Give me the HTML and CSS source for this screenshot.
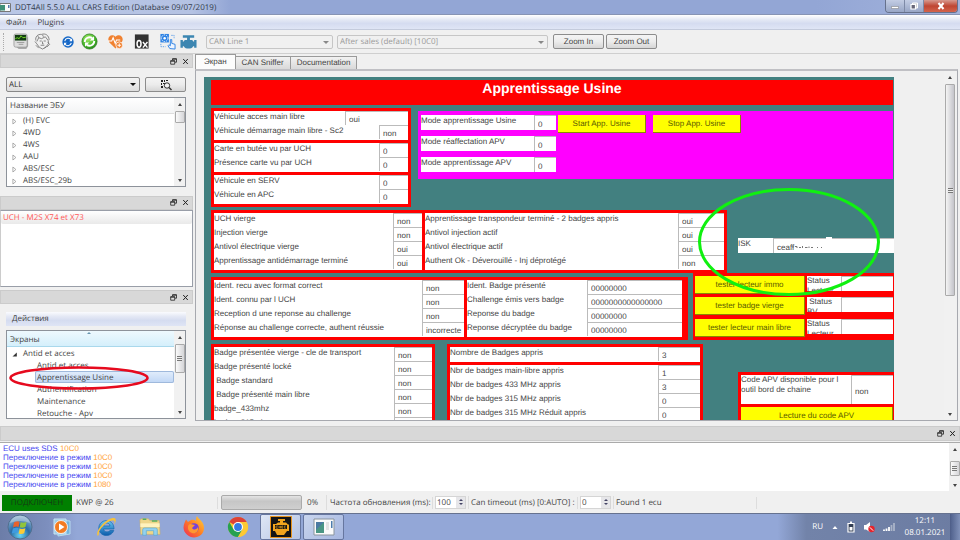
FILE: index.html
```html
<!DOCTYPE html>
<html lang="ru">
<head>
<meta charset="utf-8">
<title>DDT4All 5.5.0 ALL CARS Edition</title>
<link rel="stylesheet" href="styles.css">
</head>
<body>
<svg class="defs" aria-hidden="true">
  <defs>
    <symbol id="float" viewBox="0 0 7 7"><path d="M2.5 2V.8h4v3.4H5" fill="none" stroke="#222" stroke-width=".8"/><path d="M2.500 1h4" stroke="#222"/><path d="M.7 2.800h4v3.400h-4z" fill="#ddd" stroke="#222" stroke-width=".8"/><path d="M.5 3h4.400" stroke="#222"/></symbol>
    <symbol id="close" viewBox="0 0 7 7"><path d="M1.200 1l4.600 5M5.800 1L1.200 6" stroke="#222"/></symbol>
    <symbol id="twig" viewBox="0 0 5 7"><path d="M.9 1l3 2.500-3 2.500z" fill="#fff" stroke="#999" stroke-width=".8"/></symbol>
    <radialGradient id="orb" cx=".5" cy=".85" r=".8"><stop offset="0" stop-color="#67d4f5"/><stop offset=".5" stop-color="#2a6ba6"/><stop offset="1" stop-color="#8fb2cf"/></radialGradient>
    <radialGradient id="green" cx=".4" cy=".3" r=".8"><stop offset="0" stop-color="#a9ef6a"/><stop offset=".6" stop-color="#44b629"/><stop offset="1" stop-color="#1f7a19"/></radialGradient>
    <linearGradient id="fox" x1="1" y1="0" x2="0" y2="1"><stop offset="0" stop-color="#ffd83a"/><stop offset=".5" stop-color="#ff7b22"/><stop offset="1" stop-color="#ee2a5c"/></linearGradient>
    <linearGradient id="ie" x1="0" y1="0" x2="0" y2="1"><stop offset="0" stop-color="#66c8f5"/><stop offset="1" stop-color="#0c5aaa"/></linearGradient>
  </defs>
</svg>

<header class="titlebar">
  <svg class="app-icon" viewBox="0 0 11 9"><path d="M0 .5h10.500v8H0z" fill="#fafafa" stroke="#777"/><path d="M0 2h5v5.500H0z" fill="#3f8f78"/><path d="M8 2h1.500v3H8z" fill="#5277a8"/></svg>
  <span class="title">DDT4All 5.5.0 ALL CARS Edition (Database 09/07/2019)</span>
  <div class="window-buttons">
    <button aria-label="Minimize"><svg viewBox="0 0 10 8"><path d="M1.500 4.500h7v2h-7z" fill="#fff" stroke="#777" stroke-width=".5"/></svg></button>
    <button aria-label="Restore"><svg viewBox="0 0 10 8"><path d="M3.500 1h5v5h-5z" fill="#ccc" stroke="#fff"/><path d="M2 2.500h4.500V7H2z" fill="#667" stroke="#fff" stroke-width="1.200"/></svg></button>
    <button class="quit" aria-label="Close"><svg viewBox="0 0 10 8"><path d="M2.500 1l5 6M7.500 1l-5 6" stroke="#fff" stroke-width="2"/></svg></button>
  </div>
</header>

<nav class="menubar"><button>Файл</button><button>Plugins</button></nav>

<div class="toolbar">
  <span class="grip"></span>
  <div class="tools">
    <button aria-label="Scan"><svg viewBox="0 0 18 18"><path d="M4 15l2 2h8l2-3V4z" fill="#aaa"/><rect x="1" y="1" width="14" height="14" rx="2" fill="#ddd" stroke="#888" stroke-width=".7"/><path d="M2 2h12v6H2z" fill="#123c12"/><path d="M2.500 6l2-1 2 1 2-3 2 2 3-.5" fill="none" stroke="#78dc26"/><path d="M4 10h8M6 12h5" stroke="#999"/></svg></button>
    <button class="wide" aria-label="Expert mode"><svg viewBox="0 0 18 18" fill="none" stroke="#666" stroke-width=".8"><path d="M2 8C1 4 4 1 8 1.500c4-1.500 8 1 8 6M3 9l2-4 3 1 4-2 3 4 .5 3-3 4-3.500 2-3.500-2L3 11.500 1 9M6 8.500h2.200m2 0h2.300M9 9v2.500h1.200M7 13h4M2 13l3 3M14.500 10l2 2-3 3M4 3l1 2M9 2l1 2M11 16l2-1.500"/></svg></button>
    <button aria-label="Reload"><svg viewBox="0 0 18 18"><circle cx="8.500" cy="9.500" r="6" fill="#1668c7"/><path d="M5 8.500a3.800 3.800 0 017-1M12 10.500a3.800 3.800 0 01-7 1" fill="none" stroke="#fff" stroke-width="1.100"/><path d="M12.800 5.500v3.200H9.800zM4.200 13.500v-3.200h3z" fill="#fff"/></svg></button>
    <button class="wide" aria-label="Refresh"><svg viewBox="0 0 18 18"><circle cx="9" cy="9" r="8" fill="url(#green)" stroke="#2c7d1d" stroke-width=".8"/><path d="M4 9.500a5 5 0 018-4M14 8.500a5 5 0 01-8 4" fill="none" stroke="#fff" stroke-width="2"/><path d="M13.800 3.500v4.500H9.300zM4.200 14.500V10h4.500z" fill="#fff"/></svg></button>
    <button class="wide" aria-label="Diagnostic"><svg viewBox="0 0 18 18"><path d="M9 16.500L2.500 10C-1 5 4.500-.5 9 4c4.500-4.500 10 1 6.500 6z" fill="#f08130"/><path d="M1 8.500h4L6.500 5l2.200 6L10 7.500h4" fill="none" stroke="#fff" stroke-width="1.100"/><circle cx="13" cy="13" r="3.600" fill="#f08130" stroke="#fff" stroke-width=".8"/><path d="M13 11v4M11 13h4" stroke="#fff"/></svg></button>
    <button class="wide" aria-label="Hexadecimal"><svg viewBox="0 0 18 18"><path d="M2 1.500h14.500v15H2z" fill="#333"/><ellipse cx="6.400" cy="11.500" rx="2.100" ry="3.600" fill="none" stroke="#fff" stroke-width="1.600"/><path d="M10.500 9.500l4.800 6M15.300 9.500l-4.800 6" stroke="#fff" stroke-width="1.500"/></svg></button>
    <button aria-label="Commands"><svg viewBox="0 0 18 18"><rect x="1.500" y="1" width="9" height="9" fill="#2d82e4"/><circle cx="6" cy="5.500" r="3.500" fill="#2d82e4" stroke="#fff" stroke-width="1" stroke-dasharray="1.500 1"/><circle cx="6" cy="5.500" r="1.300" fill="#fff"/><path d="M11.500 16.500l-2-3 1-1 1.500 1V7h1.500v4l3.500 1v5z" fill="#eef5ff" stroke="#2d82e4"/><path d="M2 11.500v3h5M13 2.500h3v3" fill="none" stroke="#5c9de8" stroke-dasharray="1.500 1"/></svg></button>
    <button class="wide" aria-label="Valve"><svg viewBox="0 0 18 18" fill="#3c86b1"><path d="M3 2.500h12V5h-4.500v2.500h2.500l1 1.500h1V7.500h2.500v8H15V14h-1c-1 2-3 2.500-5 2.500S5 16 4 14H3v1.500H.5v-8H3V9h1l1-1.500h2.500V5H3z"/></svg></button>
  </div>
  <span class="select line"><select disabled aria-label="CAN line"><option>CAN Line 1</option></select></span>
  <span class="select session"><select disabled aria-label="Session"><option>After sales (default) [10C0]</option></select></span>
  <div class="zooms"><button class="push">Zoom In</button><button class="push">Zoom Out</button></div>
</div>

<main class="workspace">
  <aside class="docks">
    <section class="dock ecus">
      <div class="dock-bar"><svg><use href="#float"/></svg><svg><use href="#close"/></svg></div>
      <div class="dock-body">
        <div class="filter">
          <span class="select dark"><select aria-label="Проект"><option>ALL</option></select></span>
          <button class="push scan" aria-label="Найти"><svg viewBox="0 0 12 12"><path d="M1 1h2v2H1zM4 1h1v2H4zM6 1h2v1H6zM1 4h1v2H1zM3 4h2v1H3zM1 7h2v2H1z" fill="#222"/><circle cx="7" cy="6.500" r="2.700" fill="#f4f4f4" stroke="#333"/><path d="M9 8.500l2.500 2.500" stroke="#333" stroke-width="1.400"/></svg></button>
        </div>
        <div class="tree">
          <div class="tree-main">
            <div class="tree-head">Название ЭБУ</div>
            <ul>
              <li><svg><use href="#twig"/></svg>(H) EVC</li>
              <li><svg><use href="#twig"/></svg>4WD</li>
              <li><svg><use href="#twig"/></svg>4WS</li>
              <li><svg><use href="#twig"/></svg>AAU</li>
              <li><svg><use href="#twig"/></svg>ABS/ESC</li>
              <li><svg><use href="#twig"/></svg>ABS/ESC_29b</li>
            </ul>
          </div>
          <div class="scroll"><i class="up"></i><i class="thumb short"></i><i class="down"></i></div>
        </div>
      </div>
    </section>
    <section class="dock selected-ecus">
      <div class="dock-bar"><svg><use href="#float"/></svg><svg><use href="#close"/></svg></div>
      <div class="ecu-list"><div class="ecu-item">UCH - M2S X74 et X73</div></div>
    </section>
    <section class="dock screens">
      <div class="dock-bar"><svg><use href="#float"/></svg><svg><use href="#close"/></svg></div>
      <div class="dock-body">
        <div class="actions"><button>Действия</button></div>
        <div class="tree">
          <div class="tree-main">
            <div class="tree-head sorted">Экраны</div>
            <ul>
              <li><svg viewBox="0 0 5 7"><path d="M4.800 1.500v4H.5z" fill="#333"/></svg>Antid et acces</li>
              <li class="leaf">Antid et acces</li>
              <li class="leaf current">Apprentissage Usine</li>
              <li class="leaf">Authentification</li>
              <li class="leaf">Maintenance</li>
              <li class="leaf">Retouche - Apv</li>
            </ul>
          </div>
          <div class="scroll"><i class="up"></i><i class="thumb medium"></i><i class="down"></i></div>
        </div>
        <svg class="red-mark" viewBox="0 0 140 24"><ellipse cx="70" cy="12" rx="68.500" ry="10.500" fill="none" stroke="#e60a1e" stroke-width="2.600"/></svg>
      </div>
    </section>
  </aside>

  <section class="pages">
    <div class="tabs"><button class="active">Экран</button><button>CAN Sniffer</button><button>Documentation</button></div>
    <div class="page">
      <div class="canvas">
        <h1>Apprentissage Usine</h1>
        <div class="band first">
          <div class="stack">
            <div class="cells w29">
              <label class="w63"><span>Véhicule acces main libre</span><input readonly value="oui"></label>
              <label><span>Véhicule démarrage main libre - Sc2</span><input readonly value="non"></label>
            </div>
            <div class="cells w29">
              <label><span>Carte en butée vu par UCH</span><input readonly value="0"></label>
              <label><span>Présence carte vu par UCH</span><input readonly value="0"></label>
            </div>
            <div class="cells w29">
              <label><span>Véhicule en SERV</span><input readonly value="0"></label>
              <label><span>Véhicule en APC</span><input readonly value="0"></label>
            </div>
          </div>
          <div class="modes">
            <div class="mode-fields">
              <label class="field"><span>Mode apprentissage Usine</span><input readonly value="0"></label>
              <label class="field"><span>Mode réaffectation APV</span><input readonly value="0"></label>
              <label class="field"><span>Mode apprentissage APV</span><input readonly value="0"></label>
            </div>
            <button class="cmd start">Start App. Usine</button>
            <button class="cmd start">Stop App. Usine</button>
          </div>
        </div>
        <div class="band second">
          <div class="split virgin">
            <div class="cells w29">
              <label><span>UCH vierge</span><input readonly value="non"></label>
              <label><span>Injection vierge</span><input readonly value="non"></label>
              <label><span>Antivol électrique vierge</span><input readonly value="oui"></label>
              <label><span>Apprentissage antidémarrage terminé</span><input readonly value="oui"></label>
            </div>
            <div class="cells w46">
              <label><span>Apprentissage transpondeur terminé - 2 badges appris</span><input readonly value="oui"></label>
              <label><span>Antivol injection actif</span><input readonly value="oui"></label>
              <label><span>Antivol électrique actif</span><input readonly value="oui"></label>
              <label><span>Authent Ok - Déverouillé - Inj déprotégé</span><input readonly value="non"></label>
            </div>
          </div>
          <div class="isk">
            <label class="field"><span>ISK</span><input readonly value="ceaff"></label>
            <svg class="smudge" viewBox="0 0 40 12"><path d="M34 0h6v2h-6z" fill="#fff"/><path d="M1 9v2M3 9.500h2v1.500M7 10.500h2M10.500 9v2M13 10.500h2.500M17 9.500v1.500M19 10.500h2M25 10.500h1M29 10.500h1" fill="none" stroke="#777"/></svg>
          </div>
        </div>
        <div class="band third">
          <div class="split ident">
            <div class="cells w42">
              <label><span>Ident. recu avec format correct</span><input readonly value="non"></label>
              <label><span>Ident. connu par l UCH</span><input readonly value="non"></label>
              <label><span>Reception d une reponse au challenge</span><input readonly value="non"></label>
              <label><span>Réponse au challenge correcte, authent réussie</span><input readonly value="incorrecte"></label>
            </div>
            <div class="cells w95">
              <label><span>Ident. Badge présenté</span><input readonly value="00000000"></label>
              <label><span>Challenge émis vers badge</span><input readonly value="0000000000000000"></label>
              <label><span>Reponse du badge</span><input readonly value="00000000"></label>
              <label><span>Reponse décryptée du badge</span><input readonly value="00000000"></label>
            </div>
          </div>
          <div class="testers">
            <div class="tester"><button class="cmd">tester lecteur immo</button><label class="field"><span>Status Lecteur</span><input readonly></label></div>
            <div class="tester"><button class="cmd">tester badge vierge</button><label class="field"><span>&nbsp;Status BV</span><input readonly></label></div>
            <div class="tester"><button class="cmd">tester lecteur main libre</button><label class="field"><span>Status Lecteur</span><input readonly></label></div>
          </div>
        </div>
        <div class="band fourth">
          <div class="stack badge">
            <div class="cells w38">
              <label><span>Badge présentée vierge - cle de transport</span><input readonly value="non"></label>
              <label><span>Badge présenté locké</span><input readonly value="non"></label>
              <label><span>&nbsp;Badge standard</span><input readonly value="non"></label>
              <label><span>&nbsp;Badge présenté main libre</span><input readonly value="non"></label>
              <label><span>badge_433mhz</span><input readonly value="non"></label>
              <label><span>badge_315mhz</span><input readonly value="non"></label>
            </div>
          </div>
          <div class="stack counts">
            <div class="cells w42"><label><span>Nombre de Badges appris</span><input readonly value="3"></label></div>
            <div class="cells w42">
              <label><span>Nbr de badges main-libre appris</span><input readonly value="1"></label>
              <label><span>Nbr de badges 433 MHz appris</span><input readonly value="3"></label>
              <label><span>Nbr de badges 315 MHz appris</span><input readonly value="0"></label>
              <label><span>Nbr de badges 315 MHz Réduit appris</span><input readonly value="0"></label>
            </div>
          </div>
          <div class="stack code">
            <label class="field tall"><span>Code APV disponible pour l outil bord de chaine</span><input readonly value="non"></label>
            <button class="cmd">Lecture du code APV</button>
          </div>
        </div>
        <svg class="green-mark" viewBox="0 0 184 110"><ellipse cx="92" cy="55" rx="89.500" ry="52.500" fill="none" stroke="#10f010" stroke-width="3"/></svg>
      </div>
      <div class="scroll page-scroll"><i class="up"></i><i class="thumb long"></i><i class="down"></i></div>
    </div>
  </section>
</main>

<section class="log">
  <div class="dock-bar"><svg><use href="#float"/></svg><svg><use href="#close"/></svg></div>
  <div class="log-body">
    <div class="log-lines">
      <p>ECU uses SDS <b>10C0</b></p>
      <p>Переключение в режим <b>10C0</b></p>
      <p>Переключение в режим <b>10C0</b></p>
      <p>Переключение в режим <b>10C0</b></p>
      <p>Переключение в режим <b>1080</b></p>
    </div>
    <div class="scroll"><i class="up"></i><i class="thumb log-thumb"></i><i class="down"></i></div>
  </div>
</section>

<footer class="status">
  <span class="connected">ПОДКЛЮЧЕН</span>
  <span class="proto">KWP @ 26</span>
  <span class="progress"><span class="bar"></span>0%</span>
  <span class="cell rate"><label for="rate">Частота обновления (ms):</label></span>
  <span class="cell"><span class="spin"><input id="rate" value="100"><i></i></span></span>
  <span class="cell timeout"><label for="timeout">Can timeout (ms) [0:AUTO] :</label></span>
  <span class="cell"><span class="spin"><input id="timeout" value="0"><i></i></span></span>
  <span class="cell found">Found 1 ecu</span>
</footer>

<div class="taskbar">
  <button class="task orb" aria-label="Пуск"><svg viewBox="0 0 26 26"><circle cx="13" cy="13" r="12" fill="url(#orb)" stroke="#51708f"/><path d="M7 8.500q3-2 5.500-.7L11.600 13Q9 12 6 13.500z" fill="#e8622c"/><path d="M13.600 8.200q3 1.200 6-.5L18.500 13q-3 1.400-5.800.3z" fill="#90c43a"/><path d="M5.800 14.500q3-1.500 5.600-.4l-1 5q-2.500-1-5.500.4z" fill="#3f9be0"/><path d="M12.600 14.500q3 1.200 5.800-.2l-1.200 5q-3 1.500-5.500.2z" fill="#fccb35"/><path d="M3 9a10.500 10.500 0 0120 0Q13 5 3 9z" fill="#fff" opacity=".3"/></svg></button>
  <button class="task" aria-label="Media Player"><svg viewBox="0 0 22 22"><path d="M7 4l12 1v13L7 20z" fill="#73b5dc" stroke="#b7daef"/><path d="M3 3h12v15H3z" fill="#9dcce8" stroke="#c7e3f2"/><circle cx="10" cy="11" r="6.500" fill="#f27b21" stroke="#fff" stroke-width=".8"/><path d="M8 7.500v7l5.500-3.500z" fill="#fff"/></svg></button>
  <button class="task" aria-label="Internet Explorer"><svg viewBox="0 0 22 22"><path d="M19 13H8.500c.5 3.500 5 3.500 6.500 1.500h3.800C16 22 4 21 3.800 12 4 2.500 19 1.500 19 13zM8.500 10H15c-.5-4-6-4-6.500 0z" fill="url(#ie)" stroke="#1567ad" stroke-width=".7"/><path d="M3 20C-1 17 10 2 19 2c4 1 0 7 0 7 1-3 1-5-2-4.500C10 6 3 15 4 18z" fill="#f6c23e"/></svg></button>
  <button class="task" aria-label="Проводник"><svg viewBox="0 0 24 22"><path d="M1 3l2-1h7l2 2h10l1 15H2z" fill="#eed68a" stroke="#d6b45a" stroke-width=".6"/><path d="M4 2.500h4M14 4.500h6" stroke="#56ad62" stroke-width="1.500"/><path d="M1.500 7h21v4h-21z" fill="#fff2bd"/><path d="M4 20v-6q0-2 2-2h12q2 0 2 2v6h-4v-5H8v5z" fill="#94d1ee" stroke="#56a8d3" stroke-width=".7"/></svg></button>
  <button class="task" aria-label="Firefox"><svg viewBox="0 0 22 22"><path d="M14 0c1 3 7 5 7 12 0 6-5 9.500-10 9.500S.5 17 .5 11.500C.5 8 2 6 3 3.500L5 6l3-2c2-.5 4 0 5 1 0-2 0-3 1-5z" fill="url(#fox)"/><circle cx="11" cy="12" r="4.800" fill="#7542d9"/><path d="M5.500 9C8 7 9 9 12 9l-3 3c2 3 5 1 6-1 1 5-3 7-6 6-3-1-5-4-3.500-8z" fill="#ff9831"/></svg></button>
  <button class="task" aria-label="Chrome"><svg viewBox="0 0 22 22"><circle cx="11" cy="11" r="10" fill="#fcc934"/><path d="M11 11L2.300 6A10 10 0 0119.700 6z" fill="#dd4237"/><path d="M2.300 6A10 10 0 0011 21l4.500-7.500L11 11 6.500 13.500z" fill="#26a150"/><path d="M11 6h8.700A10 10 0 0111 21l4.500-7.500z" fill="#fcc934"/><circle cx="11" cy="11" r="5" fill="#fff"/><circle cx="11" cy="11" r="3.900" fill="#347ae5"/></svg></button>
  <button class="task open lit" aria-label="DDT4All"><svg viewBox="0 0 22 22"><path d="M.5.500h21v21H.5z" fill="#151515" stroke="#e7931c"/><path d="M8 3h7v2h-2v1.500h3l2 2h1V15h-2l-3 4H7l-2-4H3V8h3l2-1.500h2V5H8z" fill="#f2a41d"/><path d="M5 9h12v4H5z" fill="#151515"/><path d="M8 10H6v2.200h2M9 9.800v2.600M9 11h1.500M10.500 9.800v2.600M13 10h-1.300v2.200H13M11.700 11H13M15.800 10h-1.500v2.200h1.500" fill="none" stroke="#f2a41d" stroke-width=".6"/></svg></button>
  <button class="task open" aria-label="DDT4All"><svg viewBox="0 0 22 22"><path d="M1 3h20v16H1z" fill="#fafafa" stroke="#8a949e"/><path d="M3 6h8v11H3z" fill="#4a9684"/><path d="M3 6h8l-8 8z" fill="#4b7aa2"/><path d="M13 7h3M13 9h3M13 11h3M13 13h3" stroke="#ccc"/><path d="M18 5h1.500v7H18z" fill="#4c7dae"/></svg></button>
  <div class="tray">
    <span class="lang">RU</span>
    <svg viewBox="0 0 8 8"><path d="M1.500 6h5L4 3z" fill="#fff"/></svg>
    <svg viewBox="0 0 8 12"><path d="M1 2.500h6V11H1z" fill="#333f55" stroke="#fff" stroke-width="1.200"/><path d="M3 .5h2v2H3zM2.500 6h3v3.500h-3z" fill="#fff"/></svg>
    <svg class="big" viewBox="0 0 12 12"><path d="M1 4h2l4-3v10L3 8.500H1z" fill="#fff"/><circle cx="8.500" cy="8" r="3.200" fill="#e8232b"/><path d="M6.800 6.300l3.400 3.400" stroke="#fff"/></svg>
    <svg class="big" viewBox="0 0 12 12"><path d="M1 10v-1.500M3.500 10V7.500M6 10V6" stroke="#fff" stroke-width="1.800"/><path d="M8.500 10V4M11 10V2" stroke="#aab4c8" stroke-width="1.800"/></svg>
    <div class="clock">12:11<br>08.01.2021</div>
    <button class="desktop" aria-label="Показать рабочий стол"></button>
  </div>
</div>
</body>
</html>
```
FILE: styles.css
```css
* { box-sizing: border-box; }

body {
  margin: 0;
  height: 100vh;
  display: flex;
  flex-direction: column;
  overflow: hidden;
  background: #f0f0f0;
  color: #444;
  font: 8px/12px "Open Sans", "Noto Sans", sans-serif;
  text-rendering: geometricPrecision;
}

button, input, select { font: inherit; color: inherit; margin: 0; padding: 0; border: 0; background: none; border-radius: 0; min-width: 0; text-rendering: inherit; }
ul, p, h1 { margin: 0; padding: 0; list-style: none; }
svg { display: block; flex: none; }
.defs { position: absolute; width: 0; height: 0; }

/* Title bar */
.titlebar { display: flex; align-items: center; height: 15px; background: linear-gradient(90deg, #b9c7e6, #b4c2e3 20%, #93a6d5 24%, #93a6d5 85%, #a3b3dc); border-bottom: 1px solid #8794b4; flex: none; }
.app-icon { width: 11px; height: 9px; }
.title { flex: 1; padding: 2px 0 0 4px; color: #333c4c; white-space: nowrap; }
.window-buttons { display: flex; align-self: flex-start; height: 13px; margin-right: 2px; border: 1px solid #66718c; border-top: 0; border-radius: 0 0 4px 4px; overflow: hidden; }
.window-buttons button { display: flex; align-items: center; justify-content: center; width: 19px; background: linear-gradient(#c3cde4, #98a6c6); border-right: 1px solid #7e8aa6; }
.window-buttons .quit { width: 33px; border: 0; background: linear-gradient(#d79a8f, #bf4632 50%, #d4644c); }
.window-buttons svg { width: 10px; height: 8px; }

/* Menu and toolbar */
.menubar { display: flex; gap: 11px; height: 15px; padding: 1px 0 0 6px; background: linear-gradient(#fff, #e3e8f4 35%, #d5dcf0 60%, #dfe5f5); border-bottom: 1px solid #c4cbdc; flex: none; }
.toolbar { display: flex; align-items: center; height: 24px; padding-left: 3px; border-bottom: 1px solid #cfcfcf; flex: none; }
.grip { width: 1px; height: 18px; border-left: 1px dotted #aaa; }
.tools { display: flex; padding-left: 9px; width: 202px; }
.tools button { width: 22px; }
.tools .wide { width: 27px; }
.tools svg { width: 17px; height: 17px; }
.select { position: relative; display: flex; height: 14px; }
.select select { appearance: none; width: 100%; padding-left: 2px; border: 1px solid #c6c6c6; border-radius: 2px; color: #999; opacity: 1; }
.select::after { content: ""; position: absolute; right: 4px; top: 6px; border: 3px solid transparent; border-top: 3px solid #888; border-bottom: 0; }
.select.dark { flex: 1; height: 15px; }
.select.dark select { border-color: #888; background: linear-gradient(#f4f4f4, #ddd); color: #333; }
.select.dark::after { border-top-color: #111; }
.line { width: 127px; margin-right: 4px; }
.session { width: 211px; margin-right: 5px; }
.push { height: 15px; border: 1px solid #8c8c8c; border-radius: 2px; background: linear-gradient(#f4f4f4, #ececec 50%, #d6d6d6); }
.zooms { display: flex; gap: 2px; }
.zooms .push { width: 51px; font-family: "Liberation Sans", sans-serif; }

/* Docks */
.workspace { flex: 1; min-height: 0; display: flex; gap: 2px; }
.docks { width: 193px; flex: none; display: flex; flex-direction: column; }
.dock-bar { display: flex; justify-content: flex-end; align-items: center; gap: 5px; height: 14px; padding-right: 3px; background: #d8d8d8; border: 1px solid #cbcbcb; flex: none; }
.dock-bar svg { width: 7px; height: 7px; }
.dock-body { position: relative; display: flex; flex-direction: column; padding: 0 7px 0 6px; flex: 1; min-height: 0; }
.ecus { display: flex; flex-direction: column; flex: 142; min-height: 0; }
.ecus .dock-body { padding-top: 9px; padding-bottom: 9px; }
.filter { display: flex; gap: 5px; margin-bottom: 5px; }
.scan { width: 41px; display: flex; align-items: center; justify-content: center; }
.scan svg { width: 12px; height: 12px; }
.selected-ecus { display: flex; flex-direction: column; flex: 95; min-height: 0; }
.ecu-list { flex: 1; margin-bottom: 3px; border: 1px solid #999ea8; border-left-color: #ccc; background: #fff; }
.ecu-item { height: 13px; padding: 1px 0 0 2px; color: #f55; background: linear-gradient(#fff, #e9e9e9); border-radius: 2px; }
.screens { display: flex; flex-direction: column; flex: 136; min-height: 0; }
.screens .dock-body { padding-top: 8px; padding-bottom: 7px; }
.actions { height: 14px; margin-bottom: 4px; padding: 1px 0 0 6px; background: linear-gradient(#fafbfe, #e5e9f5 30%, #d5dcf0 60%, #dfe5f5); flex: none; }
.tree { display: flex; flex: 1; min-height: 0; overflow: hidden; background: #fff; border: 1px solid #8d929a; }
.tree-main { flex: 1; min-width: 0; overflow: hidden; }
.tree-head { height: 16px; padding: 2px 0 0 3px; border-bottom: 1px solid #ddd; background: linear-gradient(#fff, #f3f4f5); }
.tree-head.sorted { position: relative; background: linear-gradient(#eef9fe, #d5effb); border-color: #a9d8ec; padding-top: 3px; }
.tree-head.sorted::after { content: ""; position: absolute; left: 80px; top: 1px; border: 2px solid transparent; border-bottom-color: #6694ad; border-top: 0; }
.tree li { display: flex; align-items: center; gap: 6px; height: 12px; padding: 2px 0 0 5px; white-space: nowrap; }
.tree li svg { width: 5px; height: 7px; }
.tree li.leaf { margin-left: 28px; padding-left: 2px; }
.tree li.current { background: linear-gradient(#e3eefb, #bfd6f5); border-radius: 2px; box-shadow: inset 0 0 0 1px #9fb9dc; }
.red-mark { position: absolute; left: 9px; top: 62px; width: 140px; height: 24px; }

/* Scroll bars */
.scroll { display: flex; flex-direction: column; align-items: center; width: 11px; flex: none; background: #f1f1f1; }
.scroll .up { margin: 5px 0; border: 2px solid transparent; border-bottom: 3px solid #444; border-top: 0; }
.scroll .down { margin: auto 0 4px; border: 2px solid transparent; border-top: 3px solid #444; border-bottom: 0; }
.thumb { width: 10px; border: 1px solid #aaa; border-radius: 1px; background: linear-gradient(90deg, #fafafa, #d5d5d8); display: flex; align-items: center; justify-content: center; }
.thumb::after { content: ""; width: 5px; height: 5px; background: repeating-linear-gradient(#777 0 1px, #eee 1px 2px); }
.thumb.short { height: 12px; }
.thumb.short::after { display: none; }
.thumb.medium { height: 29px; }
.thumb.long { height: 212px; background: linear-gradient(90deg, #f4f4f4, #c4c4ca); }
.thumb.log-thumb { height: 15px; margin-top: 5px; }

/* Tabs and page */
.pages { flex: 1; min-width: 0; display: flex; flex-direction: column; }
.tabs { display: flex; align-items: flex-end; height: 15px; flex: none; font-family: "Liberation Sans", sans-serif; }
.tabs button { height: 13px; padding: 0 6px; border: 1px solid #9a9a9a; border-left-width: 0; border-bottom: 0; background: linear-gradient(#f2f2f2, #d9d9d9); }
.tabs .active { height: 15px; padding: 0 8px; background: #fcfcfc; border-left-width: 1px; }
.page { flex: 1; min-height: 0; display: flex; justify-content: space-between; margin: 0 2px 5px 0; padding: 0 1px 0 8px; border: 1px solid #a7a9af; border-top: 2px solid #c0c0c4; }
.page-scroll { width: 12px; }

/* ECU screen */
.canvas { position: relative; width: 690px; margin-top: 6px; padding: 3px 0 0 7px; overflow: hidden; background: #428080; font: 8px/11px "Liberation Sans", Arial, sans-serif; }
.canvas h1 { height: 25px; margin-right: 1px; background: #f00; color: #fff; font-size: 14px; line-height: 17px; text-align: center; }
.band { display: flex; align-items: flex-start; }
.stack, .split { border: 3px solid #f00; background: #f00; flex: none; }
.stack { display: flex; flex-direction: column; gap: 3px; }
.split { display: grid; gap: 3px; }
.cells { background: #fff; padding-bottom: 1px; }
.cells label, .field { display: flex; height: 14px; white-space: nowrap; }
.cells span { flex: 1; min-width: 0; }
.canvas input { height: 14px; padding: 2px 0 0 3px; line-height: 11px; border: 1px solid #bbb; border-right: 0; border-bottom: 0; background: #fff; flex: none; }
.canvas .w29 input { width: 29px; }
.canvas .w38 input { width: 38px; }
.canvas .w42 input { width: 42px; }
.canvas .w46 input { width: 46px; }
.canvas .w95 input { width: 95px; }
.canvas .cells .w63 input { width: 63px; }
.first { gap: 7px; margin-top: 3px; }
.first .stack { width: 200px; }
.first .stack .cells { height: 29px; }
.modes { flex: 1; display: flex; align-items: flex-start; margin: 3px 1px 0 0; padding: 4px 3px 7px; background: #f0f; }
.mode-fields { display: grid; gap: 6px; width: 135px; margin-right: 2px; }
.field { height: 15px; background: #fff; overflow: hidden; }
.field span { flex: 1; }
.canvas .field input { height: 15px; }
.canvas .mode-fields input { width: 22px; }
.cmd { background: #ff0; color: #5a5a00; height: 18px; border-right: 1px solid #8a8a00; border-bottom: 1px solid #8a8a00; }
.start { width: 88px; margin-right: 7px; }
.second { margin-top: 3px; }
.virgin { width: 516px; grid-template-columns: 208px 1fr; height: 63px; }
.isk { position: relative; flex: 1; margin: 28px 0 0 11px; }
.canvas .isk input { width: 121px; }
.smudge { position: absolute; left: 54px; top: -1px; width: 40px; height: 12px; }
.ident { width: 477px; margin-top: 4px; grid-template-columns: 250px 1fr; border-right-width: 6px; height: 63px; }
.testers { flex: 1; display: grid; gap: 3px; margin-left: 5px; padding: 3px 1px 3px 2px; background: #f00; height: 67px; }
.tester { display: flex; gap: 2px; }
.tester .cmd { width: 110px; }
.tester .field { flex: 1; }
.tester .field span { white-space: normal; line-height: 10px; }
.canvas .tester input { width: 52px; }
.fourth { margin-top: 4px; }
.badge { width: 224px; margin-right: 12px; }
.counts { width: 256px; margin-right: 35px; }
.code { flex: 1; margin-top: 28px; border-right-width: 1px; }
.tall { height: 29px; }
.tall span { white-space: normal; line-height: 10px; }
.canvas .tall input { width: 42px; height: 29px; }
.green-mark { position: absolute; left: 493px; top: 110px; width: 184px; height: 110px; }

/* Log */
.log { flex: none; }
.log .dock-bar { height: 15px; }
.log-body { display: flex; height: 49px; margin-top: 1px; border-top: 1px solid #aaa; background: #fff; }
.log-lines { flex: 1; padding: 1px 0 0 3px; color: #4848f0; font: 8px/9px "Liberation Sans", sans-serif; }
.log-lines b { color: #ffa43a; font-weight: normal; }

/* Status bar */
.status { display: flex; align-items: center; height: 22px; padding: 1px 0 0 2px; flex: none; }
.connected { width: 70px; height: 16px; line-height: 16px; text-align: center; background: #008000; color: #143a14; }
.proto { width: 146px; padding-left: 4px; border-right: 1px solid #ddd; }
.progress { display: flex; align-items: center; gap: 5px; width: 109px; padding-left: 3px; border-right: 1px solid #ddd; }
.bar { width: 81px; height: 15px; border: 1px solid #aaa; border-radius: 2px; background: linear-gradient(#e4e4e4, #c6c6c6 40%, #cfcfcf); }
.cell { padding: 0 2px; border-right: 1px solid #ddd; white-space: nowrap; }
.rate { width: 106px; padding-left: 3px; }
.timeout { width: 109px; }
.spin { display: flex; align-items: center; width: 31px; height: 13px; border: 1px solid #d5d5d5; background: #fff; }
.spin input { width: 20px; padding-left: 1px; }
.spin i { width: 9px; height: 11px; background: #e6e6e9; display: flex; flex-direction: column; align-items: center; gap: 2px; padding-top: 2px; }
.spin i::before, .spin i::after { content: ""; border: 2px solid transparent; }
.spin i::before { border-bottom: 2px solid #446; border-top: 0; }
.spin i::after { border-top: 2px solid #446; border-bottom: 0; }
.found { width: 143px; }

/* Taskbar */
.taskbar { display: flex; align-items: center; height: 27px; border-top: 1px solid #66728f; background: linear-gradient(90deg, #6c7da8, #7d8fbe 5%, #93a7d7 8%, #93a7d7 81%, #7283a9 84%, #6c7ca2); flex: none; }
.task { display: flex; align-items: center; justify-content: center; width: 44px; height: 26px; }
.task svg { width: 22px; height: 22px; }
.orb { width: 40px; }
.orb svg { width: 26px; height: 26px; }
.open { width: 41px; margin-right: 2px; border: 1px solid #66769f; border-radius: 2px; background: linear-gradient(135deg, #c9d5ee, #a5b6df); }
.lit { background: linear-gradient(135deg, #dfe7f5, #b4c3e3); }
.tray { display: flex; align-items: center; gap: 8px; margin-left: auto; height: 100%; color: #fff; }
.tray svg { width: 8px; height: 12px; }
.tray .big { width: 12px; }
.clock { width: 44px; text-align: center; line-height: 12px; }
.desktop { width: 10px; height: 100%; margin-left: -5px; border-left: 1px solid #50608a; background: linear-gradient(90deg, #53648f, #8091b9); }
```
